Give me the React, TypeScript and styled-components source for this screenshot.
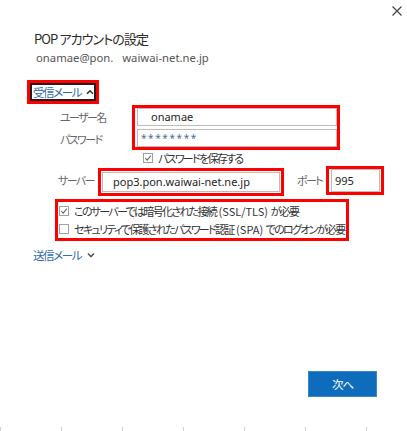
import styled, { createGlobalStyle } from 'styled-components'

const GlobalStyle = createGlobalStyle`
  html, body {
    margin: 0;
    padding: 0;
    background: #fff;
  }
  body {
    font-family: "Noto Sans CJK JP", "Noto Sans", sans-serif;
    font-feature-settings: "palt";
  }
`

const CheckIcon = ({ checked }: { checked: boolean }) => (
  <CheckBox width="10" height="10" viewBox="0 0 10 10">
    <rect x="0.5" y="0.5" width="9" height="9" fill="#fff" stroke="#a0a0a0" />
    {checked && <path d="M2.2 5.2 L4.2 7.2 L7.9 2.6" fill="none" stroke="#6a6a6a" strokeWidth="1.1" />}
  </CheckBox>
)

const Chevron = ({ up }: { up?: boolean }) => (
  <CheckBox width="8" height="6" viewBox="0 0 8 6">
    <path d={up ? 'M1 4.8 L4 1.8 L7 4.8' : 'M1 1.5 L4 4.5 L7 1.5'} fill="none" stroke={up ? '#333' : '#555'} strokeWidth="1.6" />
  </CheckBox>
)

const App = () => {
  return (
    <>
      <GlobalStyle />
      <Dialog>
        <TopBar>
          <svg width="10" height="10" viewBox="0 0 10 10">
            <path d="M0.5 0.5 L9.5 9.5 M9.5 0.5 L0.5 9.5" stroke="#444" strokeWidth="1.2" />
          </svg>
        </TopBar>

        <Title>POP アカウントの設定</Title>
        <Email>onamae@pon.&nbsp;&nbsp;&nbsp;waiwai-net.ne.jp</Email>

        <ToggleFrame>
          <Toggle>
            受信メール
            <Chevron up />
          </Toggle>
        </ToggleFrame>

        <CredRow>
          <LabelCol>
            <Label>ユーザー名</Label>
            <Label>パスワード</Label>
          </LabelCol>
          <CredFrame>
            <Input indent={13}>onamae</Input>
            <Input indent={3}>
              <Stars>********</Stars>
            </Input>
          </CredFrame>
        </CredRow>

        <SaveRow>
          <CheckIcon checked />
          <CheckText>パスワードを保存する</CheckText>
        </SaveRow>

        <ServerRow>
          <ServerLabel>サーバー</ServerLabel>
          <ServerFrame>
            <Input indent={10} h={20}>pop3.pon.waiwai-net.ne.jp</Input>
          </ServerFrame>
          <PortLabel>ポート</PortLabel>
          <PortFrame>
            <Input indent={3} h={23}>995</Input>
          </PortFrame>
        </ServerRow>

        <OptionsFrame>
          <OptionRow>
            <CheckIcon checked />
            <CheckText>
              このサーバーでは暗号化された接続<Latin>&nbsp;(SSL/TLS)&nbsp;</Latin>が必要
            </CheckText>
          </OptionRow>
          <OptionRow>
            <CheckIcon checked={false} />
            <CheckText>
              セキュリティで保護されたパスワード認証<Latin>&nbsp;(SPA)&nbsp;</Latin>でのログオンが必要
            </CheckText>
          </OptionRow>
        </OptionsFrame>

        <OutLink>
          送信メール
          <Chevron />
        </OutLink>

        <Footer>
          <NextButton>次へ</NextButton>
        </Footer>

        <Ticks>
          {[0, 1, 2, 3, 4, 5, 6].map((i) => (
            <Tick key={i} />
          ))}
        </Ticks>
      </Dialog>
    </>
  )
}

export default App

const Dialog = styled.div`
  width: 407px;
  height: 431px;
  display: flex;
  flex-direction: column;
  overflow: hidden;
  background: #fff;
`

const CheckBox = styled.svg`
  flex-shrink: 0;
`

const TopBar = styled.div`
  height: 24px;
  display: flex;
  justify-content: flex-end;
  align-items: center;
  padding-right: 5px;
`

const Title = styled.div`
  margin: 8px 0 0 34px;
  height: 20px;
  line-height: 20px;
  font-size: 13px;
  letter-spacing: -0.9px;
  color: #2b2b2b;
  white-space: nowrap;
`

const Email = styled.div`
  margin: 1px 0 0 36px;
  height: 16px;
  line-height: 16px;
  font-family: "Noto Sans", sans-serif;
  font-size: 11.3px;
  color: #555;
  white-space: nowrap;
`

const ToggleFrame = styled.div`
  margin: 14px 0 0 27px;
  width: 66px;
  border: 3px solid #f00;
`

const Toggle = styled.div`
  display: flex;
  align-items: center;
  gap: 5px;
  height: 14px;
  padding-left: 1px;
  border: 2px solid #1e1e1e;
  font-size: 11.5px;
  letter-spacing: -1.4px;
  line-height: 14px;
  color: #2f6bb3;
  white-space: nowrap;
`

const CredRow = styled.div`
  display: flex;
  margin: 1px 0 0 60px;
`

const LabelCol = styled.div`
  width: 72px;
  display: flex;
  flex-direction: column;
  gap: 4px;
  padding-top: 3px;
`

const Label = styled.div`
  height: 18px;
  line-height: 18px;
  font-size: 11px;
  letter-spacing: -1.6px;
  color: #666;
  white-space: nowrap;
`

const CredFrame = styled.div`
  width: 200px;
  border: 3px solid #f00;
  display: flex;
  flex-direction: column;
  gap: 3px;
  padding-left: 2px;
  box-sizing: content-box;
`

const Input = styled.div<{ indent: number; h?: number }>`
  box-sizing: border-box;
  height: ${(p) => p.h ?? 18}px;
  line-height: ${(p) => (p.h ?? 18) - 2}px;
  padding-left: ${(p) => p.indent}px;
  border: 1px solid #bcbcbc;
  background: #fff;
  font-family: "Noto Sans", sans-serif;
  font-size: 11px;
  color: #1e1e1e;
  white-space: nowrap;
  overflow: hidden;
`

const Stars = styled.span`
  font-size: 10px;
  letter-spacing: 1.6px;
  color: #4d6d9a;
  vertical-align: top;
`

const SaveRow = styled.div`
  display: flex;
  align-items: center;
  gap: 5px;
  height: 14px;
  margin: 1px 0 0 143px;
`

const CheckText = styled.span`
  font-size: 11px;
  letter-spacing: -1.7px;
  color: #333;
  white-space: nowrap;
`

const Latin = styled.span`
  letter-spacing: 0;
`

const ServerRow = styled.div`
  display: flex;
  align-items: center;
  height: 30px;
  margin: 0 0 0 58px;
`

const ServerLabel = styled.div`
  width: 40px;
  font-size: 11px;
  letter-spacing: -1.6px;
  color: #666;
  white-space: nowrap;
`

const ServerFrame = styled.div`
  width: 178px;
  padding: 1px;
  border: 3px solid #f00;
  margin-top: 3px;
`

const PortLabel = styled.div`
  width: 29px;
  margin-left: 13px;
  font-size: 11px;
  letter-spacing: -1.6px;
  color: #666;
  white-space: nowrap;
`

const PortFrame = styled.div`
  width: 49px;
  padding: 0 1px 0 2px;
  border: 3px solid #f00;
`

const OptionsFrame = styled.div`
  width: 288px;
  height: 36px;
  margin: 4px 0 0 55px;
  border: 3px solid #f00;
  display: flex;
  flex-direction: column;
`

const OptionRow = styled.div`
  display: flex;
  align-items: center;
  gap: 5px;
  height: 18px;
  padding-left: 1px;
`

const OutLink = styled.div`
  display: flex;
  align-items: center;
  gap: 6px;
  height: 16px;
  margin: 6px 0 0 33px;
  font-size: 11.5px;
  letter-spacing: -1.4px;
  color: #2f6bb3;
  white-space: nowrap;
`

const Footer = styled.div`
  display: flex;
  justify-content: flex-end;
  padding-right: 30px;
  margin-top: 108px;
`

const NextButton = styled.button`
  width: 69px;
  height: 26px;
  border: 1px solid #3a86cc;
  background: #0f6cbd;
  color: #fff;
  font-family: inherit;
  font-size: 11.5px;
  letter-spacing: -1px;
  padding: 0;
  cursor: pointer;
`

const Ticks = styled.div`
  display: flex;
  gap: 60px;
  margin-top: 30px;
`

const Tick = styled.div`
  width: 1px;
  height: 4px;
  background: #d0d0d0;
`
